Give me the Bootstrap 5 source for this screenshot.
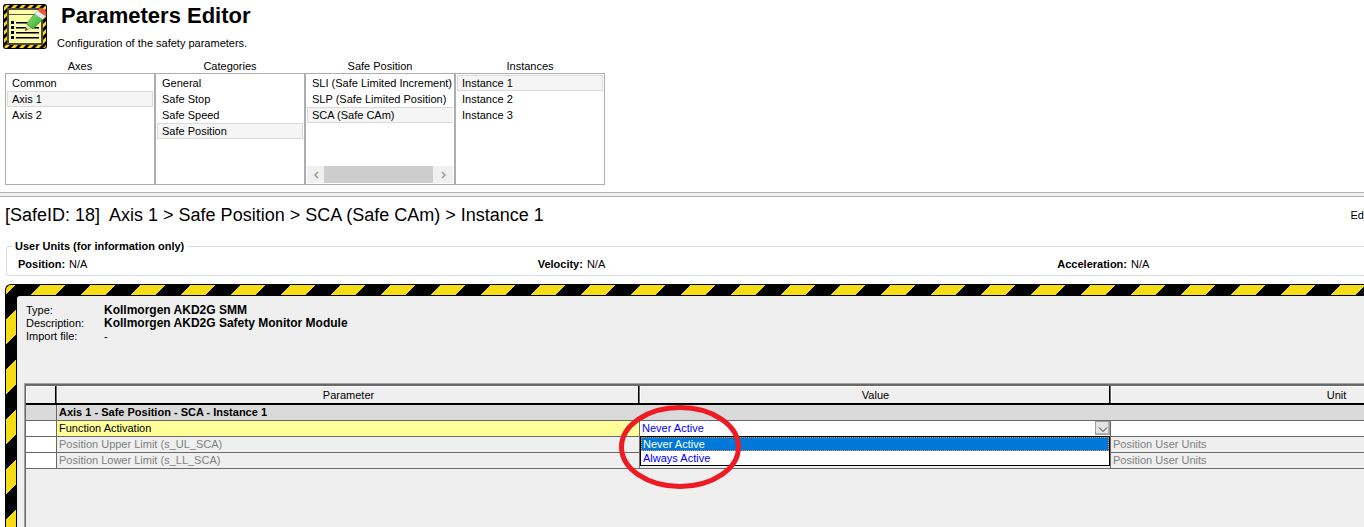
<!DOCTYPE html>
<html lang="en">
<head>
<meta charset="utf-8">
<meta name="viewport" content="width=device-width, initial-scale=1">
<title>Parameters Editor</title>
<link href="https://cdn.jsdelivr.net/npm/bootstrap@5.3.0/dist/css/bootstrap.min.css" rel="stylesheet">
<style>
  :root { --cut: 198px; --line: #696969; --face: #efefef; }
  html, body { height: 100%; }
  body { font: 11px/16px "Liberation Sans", Arial, sans-serif; color: #000; background: #fff; overflow: hidden; }
  .app-bar { padding: 4px 3px 0; }
  .app-icon { width: 44px; height: 45px; }
  .app-title { font-size: 22px; line-height: 24px; font-weight: 700; padding-left: 4px; }
  .app-names { padding-left: 10px; }
  .app-sub { margin-top: 7px; line-height: 16px; }
  .pickers { padding: 8px 0 7px 5px; }
  .picker { width: 150px; }
  .picker-label { line-height: 14px; }
  .picker-box { height: 112px; border: 1px solid #abadb3; padding: 1px; }
  .picker .list-group-item { font-size: 11px; line-height: 14px; padding: 0 0 0 4px; border: 1px solid transparent; color: #000; background: #fff; white-space: nowrap; text-align: left; }
  .picker .list-group-item.active { background: #f5f5f5; border-color: #dadada; margin: 0; }
  .picker .list-group-item.runs-on { border-right-color: #f5f5f5; }
  .hscroll { height: 17px; background: #f0f0f0; }
  .hscroll .thumb { width: 109px; background: #cdcdcd; }
  .hscroll .to-left { width: 17px; }
  .splitter { height: 5px; border: solid #b0b0b0; border-width: 1px 0; background: #f0f0f0; }
  .crumb-row { padding: 7px 0 0 5px; }
  .crumb { font-size: 18px; line-height: 22px; }
  .wide { width: calc(100% + var(--cut)); }
  .units { border: 1px solid #d5dfe5; border-radius: 3px; height: 36px; margin: 14px -16px 0 6px; }
  .units legend { float: none; width: auto; font-size: 11px; line-height: 12px; font-weight: 700; background: #fff; padding: 0 3px; margin: 0 0 0 5px; }
  .units .row { padding: 4px 0 0 11px; }
  .units span { margin-left: 4px; }
  .hazard { border: solid #000; border-width: 1px 0 0 1px; border-radius: 6px 0 0 0; margin: 8px 0 0 5px; padding: 11px 0 0 11px;
    background: linear-gradient(135deg, #000 25%, #f5dc14 25% 50%, #000 50% 75%, #f5dc14 75%) 10px 0 / 50px 50px; }
  .panel-face { background: var(--face); border-radius: 3px 0 0 0; box-shadow: 0 0 0 1px #000; padding: 8px 0 0 9px; }
  .about { line-height: 13px; }
  .about dt { width: 78px; font-weight: 400; }
  .about .fw-bold { font-size: 12px; }
  .grid-frame { margin: 40px 0 0 -2px; border: solid #a0a0a0; border-width: 1px 0 0 1px; }
  .grid-inner { border: solid var(--line); border-width: 2px 0 0 1px; }
  .params { table-layout: fixed; width: 100%; border-collapse: separate; border-spacing: 0; }
  .params th, .params td { padding: 0 0 0 2px; height: 16px; line-height: 15px; border-right: 1px solid var(--line); border-bottom: 1px solid var(--line); }
  .params thead th { height: 19px; line-height: 16px; font-weight: 400; text-align: center; padding: 0; border: 0; border-bottom: 2px solid #000; box-shadow: inset -1px 0 var(--line), inset -2px 0 #000, inset 1px 1px #fff; }
  .params .group > * { background: #dadada; }
  .c-mark { width: 31px; } .c-value { width: 471px; } .c-unit { width: 451px; }
  .params tbody:last-child td:first-child { background: #fff; }
  .current th { background: #ffff99; font-weight: 400; }
  .current td { background: #fff; }
  .off { color: #808080; }
  .off th { font-weight: 400; }
  .combo { height: 15px; }
  .combo select { appearance: none; display: block; width: 100%; height: 15px; padding: 0; border: 0; border-radius: 0; color: #00f; background: #fff; font: inherit; }
  .combo .drop { right: 0; top: 0; width: 15px; height: 14px; border: 1px solid #a0a0a0; background: #e3e3e3; box-shadow: inset -1px -1px #b4b4b4; }
  .menu-open { left: -2px; right: 0; top: 15px; border: 1px solid #000; background: #fff; z-index: 2; }
  .menu-open button { display: block; width: 100%; height: 14px; line-height: 12px; padding: 0 0 0 1px; border: 1px solid transparent; text-align: left; color: #00f; background: #fff; }
  .menu-open button.chosen { color: #fff; background: #0078d7; border: 1px dotted #ff8728; }
  .ring { left: -23px; top: -16px; width: 122px; height: 84px; z-index: 3; pointer-events: none; }
</style>
</head>
<body class="d-flex flex-column">
<header class="app-bar d-flex">
  <svg class="app-icon flex-shrink-0" viewBox="0 0 44 45" aria-hidden="true">
    <defs><pattern id="hz" width="8" height="8" patternUnits="userSpaceOnUse"><path fill="#000" d="M0 0h8v8H0z"/><path fill="#ffd21c" d="M0 4 4 0h4L0 8zM8 4v4H4z"/></pattern>
    <linearGradient id="gp" x1="0" y1="0" x2="1" y2="1"><stop offset="0" stop-color="#8be37b"/><stop offset="1" stop-color="#2fa52c"/></linearGradient></defs>
    <rect width="44" height="45" rx="3" fill="#000"/><rect x="1" y="1" width="42" height="43" rx="2" fill="url(#hz)"/>
    <rect x="4" y="4" width="36" height="37" fill="#4a4a40"/><rect x="6" y="6" width="32" height="33" fill="#ffffa8"/>
    <path stroke="#55554a" d="M6 10.500h32"/>
    <path fill="#000" d="M8 17h3v3H8zm0 5h3v3H8zm0 5h3v3H8zm0 5h3v3H8zM13 18h23v1H13zm0 5h23v1H13zm0 5h23v1H13zm0 5h23v1H13z"/>
    <path fill="#77776a" d="M13 19h23v1H13zm0 5h23v1H13zm0 5h23v1H13zm0 5h23v1H13z"/>
    <path fill="#ead9b0" d="m22 27 1.500-7 6.500 5z"/><path fill="#555" d="m22 27 .7-3.500 2.600 2z"/>
    <path fill="url(#gp)" stroke="#338b2b" stroke-width=".6" d="m23.500 20 8-10 8 5.500-9.500 9.500z"/>
    <path fill="#e9edf2" stroke="#999" stroke-width=".5" d="m31.500 10 3-3.500 8 5.500-3 3.500z"/>
    <path fill="#e85b38" d="M34.500 6.500Q37 3 41 5q4 3 1.500 7z"/>
  </svg>
  <div class="app-names">
    <h1 class="app-title mb-0">Parameters Editor</h1>
    <p class="app-sub mb-0">Configuration of the safety parameters.</p>
  </div>
</header>
<section class="pickers d-flex">
  <div class="picker"><div class="picker-label text-center">Axes</div>
    <div class="picker-box list-group rounded-0">
      <button class="list-group-item">Common</button><button class="list-group-item active">Axis 1</button><button class="list-group-item">Axis 2</button></div></div>
  <div class="picker"><div class="picker-label text-center">Categories</div>
    <div class="picker-box list-group rounded-0">
      <button class="list-group-item">General</button><button class="list-group-item">Safe Stop</button><button class="list-group-item">Safe Speed</button><button class="list-group-item active">Safe Position</button></div></div>
  <div class="picker"><div class="picker-label text-center">Safe Position</div>
    <div class="picker-box list-group rounded-0">
      <button class="list-group-item">SLI (Safe Limited Increment)</button><button class="list-group-item">SLP (Safe Limited Position)</button><button class="list-group-item active runs-on">SCA (Safe CAm)</button>
      <div class="hscroll d-flex mt-auto">
        <button class="to-left btn rounded-0 p-0 border-0 d-flex align-items-center justify-content-center" aria-label="Scroll left"><svg width="6" height="8" fill="none" stroke="#999" stroke-width="1.500"><path d="M5 1 2 4 5 7"/></svg></button>
        <div class="thumb"></div>
        <button class="btn rounded-0 p-0 border-0 flex-grow-1 d-flex align-items-center justify-content-center" aria-label="Scroll right"><svg width="6" height="8" fill="none" stroke="#999" stroke-width="1.500"><path d="M2 1 5 4 2 7"/></svg></button>
      </div></div></div>
  <div class="picker"><div class="picker-label text-center">Instances</div>
    <div class="picker-box list-group rounded-0">
      <button class="list-group-item active">Instance 1</button><button class="list-group-item">Instance 2</button><button class="list-group-item">Instance 3</button></div></div>
</section>
<div class="splitter flex-shrink-0"></div>
<div class="crumb-row d-flex justify-content-between align-items-center">
  <h2 class="crumb mb-0">[SafeID: 18]&nbsp; Axis 1 &gt; Safe Position &gt; SCA (Safe CAm) &gt; Instance 1</h2>
  <a href="#" class="text-reset text-decoration-none">Ed</a>
</div>
<main class="wide d-flex flex-column flex-grow-1">
  <fieldset class="units">
    <legend>User Units (for information only)</legend>
    <div class="row gx-0">
      <div class="col-4"><b>Position:</b><span>N/A</span></div>
      <div class="col-4"><b>Velocity:</b><span>N/A</span></div>
      <div class="col-4"><b>Acceleration:</b><span>N/A</span></div>
    </div>
  </fieldset>
  <div class="hazard d-flex flex-grow-1">
    <div class="panel-face flex-grow-1 d-flex flex-column">
      <dl class="about mb-0">
        <div class="d-flex"><dt>Type:</dt><dd class="mb-0 fw-bold">Kollmorgen AKD2G SMM</dd></div>
        <div class="d-flex"><dt>Description:</dt><dd class="mb-0 fw-bold">Kollmorgen AKD2G Safety Monitor Module</dd></div>
        <div class="d-flex"><dt>Import file:</dt><dd class="mb-0">-</dd></div>
      </dl>
      <div class="grid-frame flex-grow-1 d-flex"><div class="grid-inner flex-grow-1">
        <table class="params">
          <colgroup><col class="c-mark"><col><col class="c-value"><col class="c-unit"></colgroup>
          <thead><tr><th></th><th>Parameter</th><th>Value</th><th>Unit</th></tr></thead>
          <tbody>
            <tr class="group"><td></td><th colspan="3">Axis 1 - Safe Position - SCA - Instance 1</th></tr>
          </tbody>
          <tbody>
            <tr class="current"><td></td><th><label for="fn">Function Activation</label></th>
              <td><div class="combo position-relative">
                <select id="fn"><option>Never Active</option><option>Always Active</option></select>
                <span class="drop position-absolute d-flex align-items-end justify-content-center"><svg width="10" height="8" fill="none" stroke="#333"><path d="M1 1.500 5 5.500 9 1.500"/></svg></span>
                <div class="menu-open position-absolute"><button class="chosen">Never Active</button><button>Always Active</button></div>
                <svg class="ring position-absolute" viewBox="0 0 122 84" aria-hidden="true"><ellipse cx="61" cy="42" rx="58.500" ry="39.500" fill="none" stroke="#ed1c24" stroke-width="5"/></svg>
              </div></td><td></td></tr>
            <tr class="off"><td></td><th>Position Upper Limit (s_UL_SCA)</th><td></td><td>Position User Units</td></tr>
            <tr class="off"><td></td><th>Position Lower Limit (s_LL_SCA)</th><td></td><td>Position User Units</td></tr>
          </tbody>
        </table>
      </div></div>
    </div>
  </div>
</main>
<script src="https://cdn.jsdelivr.net/npm/bootstrap@5.3.0/dist/js/bootstrap.bundle.min.js"></script>
</body>
</html>
